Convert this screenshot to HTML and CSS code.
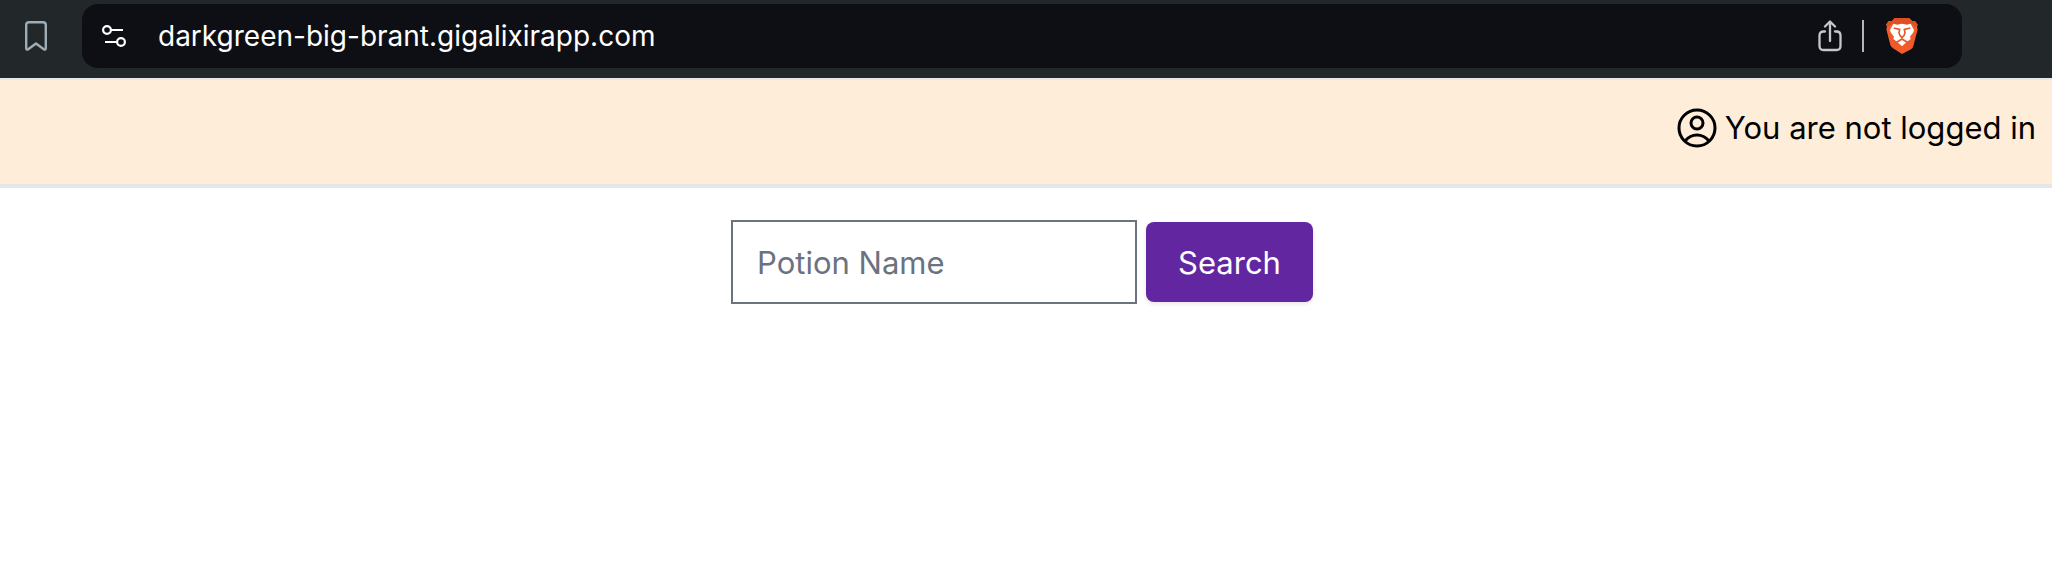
FILE: index.html
```html
<!DOCTYPE html>
<html lang="en">
<head>
  <meta charset="UTF-8">
  <meta name="viewport" content="width=device-width, initial-scale=1.0">
  <title>Potions</title>
  <link rel="stylesheet" href="styles.css">
</head>
<body>
  <div class="toolbar">
    <button class="icon-btn" type="button" aria-label="Bookmark">
      <svg class="bookmark" viewBox="0 0 22 30" fill="none" stroke="#9fadb6" stroke-width="2.400" stroke-linejoin="round">
        <path d="M4 1.200h14q2.800 0 2.800 3v22.800q0 2.500-2 1.200l-7.800-5.700-7.800 5.700q-2 1.300-2-1.200V4.200q0-3 2.800-3z"/>
      </svg>
    </button>
    <div class="address-bar">
      <button class="icon-btn" type="button" aria-label="Site settings">
        <svg class="settings" viewBox="0 0 24 24" fill="none" stroke="#fff" stroke-width="2.200">
          <circle cx="5" cy="6" r="3.900"/>
          <path d="M9 6h12M3 18h12"/>
          <circle cx="19" cy="18" r="3.900"/>
        </svg>
      </button>
      <span class="url">darkgreen-big-brant.gigalixirapp.com</span>
      <button class="icon-btn" type="button" aria-label="Share">
        <svg class="share" viewBox="0 0 24 32" fill="none" stroke="#c6c7ca" stroke-width="2.300" stroke-linecap="round" stroke-linejoin="round">
          <path d="M7 11.500H5.500q-4 0-4 4v10.500q0 4 4 4h13q4 0 4-4V15.500q0-4-4-4H17"/>
          <path d="M12 21V2M7 6.500l5-5 5 5"/>
        </svg>
      </button>
      <span class="divider"></span>
      <button class="icon-btn" type="button" aria-label="Brave Shields">
        <svg class="brave" viewBox="0 0 96 108">
          <path fill="#f15a29" d="M26 0h43l10 10 8-1 8 11-2 7 2 7-13 50q-2 7-7 10L48 108 21 91q-6-4-8-10L1 34l2-7-3-7L8 9l9 1z"/>
          <path fill="#de4f21" d="M26 0h43l10 10 8-1 8 11-4 6-15-9-28 2-28-2-15 9-5-6L8 9l9 1z"/>
          <path fill="#fff" d="M22 17l11 3 15-3 15 3 11-3 10 19-2 7-10 13 2 7-12 9-14 13-14-13-12-9 2-7-10-13-2-7z"/>
          <g fill="none" stroke="#e8572a" stroke-width="5">
            <path d="M23 30l18 4-2 10 3 9 6 6 6-6 3-9-2-10 18-4"/>
            <path d="M27 76l21-13 21 13"/>
          </g>
        </svg>
      </button>
    </div>
  </div>

  <header class="header">
    <svg class="user" viewBox="0 0 40 40" fill="none" stroke="#000" stroke-width="3">
      <circle cx="20" cy="20" r="18"/>
      <circle cx="20" cy="15" r="6"/>
      <path d="M8 33q5-6 12-6t12 6"/>
    </svg>
    <span>You are not logged in</span>
  </header>

  <main>
    <form class="search">
      <input class="search-input" type="text" name="name" placeholder="Potion Name" aria-label="Potion Name">
      <button class="search-btn" type="button">Search</button>
    </form>
  </main>
</body>
</html>
```

FILE: styles.css
```css
body {
  margin: 0;
  background-color: #fff;
  color: #000;
  font-family: Inter, "Liberation Sans", sans-serif;
  font-size: 31px;
}
svg {
  display: block;
}
.icon-btn {
  padding: 0;
  border: none;
  background: none;
  cursor: pointer;
}
.toolbar {
  display: flex;
  align-items: center;
  padding: 4px 90px 10px 25px;
  background-color: #222729;
  border-bottom: 2px solid #e5e7eb;
}
.address-bar {
  flex: 1;
  display: flex;
  align-items: center;
  box-sizing: border-box;
  height: 64px;
  margin-left: 35px;
  padding: 0 44px 0 20px;
  border-radius: 16px;
  background-color: #0e0f14;
}
.bookmark {
  width: 22px;
  height: 30px;
}
.settings {
  width: 24px;
  height: 24px;
}
.url {
  flex: 1;
  margin-left: 32px;
  color: #fff;
  font-size: 28px;
}
.share {
  width: 24px;
  height: 32px;
}
.divider {
  width: 2px;
  height: 32px;
  margin: 0 22px 0 20px;
  background-color: #b4b5b8;
}
.brave {
  width: 32px;
  height: 36px;
}
.header {
  display: flex;
  justify-content: flex-end;
  align-items: center;
  gap: 8px;
  padding: 28px 16px 36px;
  background-color: #fdedd9;
  border-bottom: 4px solid #e5e7eb;
  line-height: 40px;
}
.user {
  width: 40px;
  height: 40px;
}
.search {
  display: flex;
  justify-content: center;
  align-items: center;
  gap: 9px;
  padding: 32px 8px 32px 0;
}
.search-input {
  box-sizing: border-box;
  width: 406px;
  height: 84px;
  padding: 16px 24px;
  border: 2px solid #6b7280;
  background-color: #fff;
  font: inherit;
}
.search-input::placeholder {
  color: #6b7280;
  opacity: 1;
}
.search-btn {
  height: 80px;
  padding: 0 32px;
  border: none;
  border-radius: 8px;
  background-color: #6226a0;
  box-shadow: 0 2px 4px rgba(0, 0, 0, 0.1);
  color: #fff;
  font: inherit;
  cursor: pointer;
}
```
